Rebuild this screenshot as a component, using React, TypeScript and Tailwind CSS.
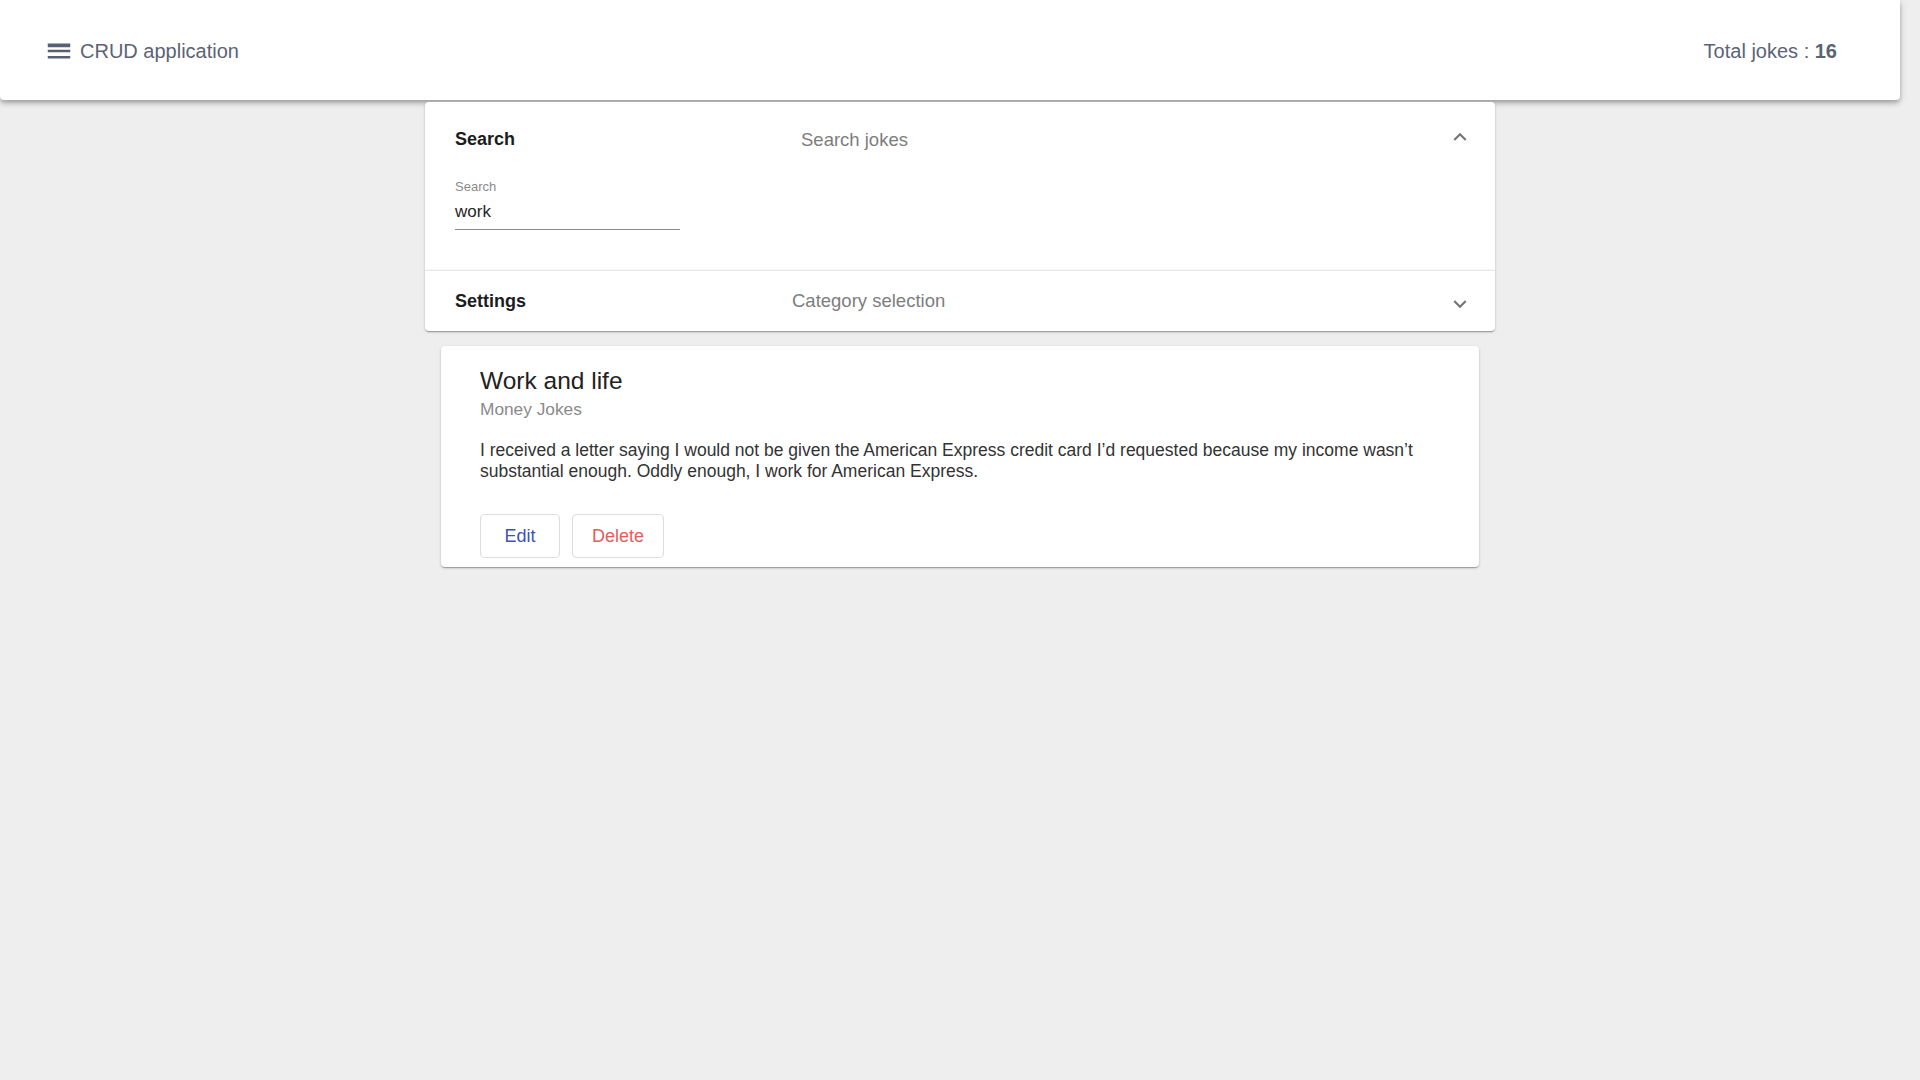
import React from "react";

function MenuIcon() {
  return (
    <svg width="30" height="30" viewBox="0 0 24 24" fill="#586075">
      <path d="M3 18h18v-2H3v2zm0-5h18v-2H3v2zm0-6v2h18V6H3z" />
    </svg>
  );
}

function Chevron({ up }: { up?: boolean }) {
  return (
    <svg
      width="26"
      height="26"
      viewBox="0 0 24 24"
      fill="#757575"
      className={up ? "rotate-180" : ""}
    >
      <path d="M16.59 8.59L12 13.17 7.41 8.59 6 10l6 6 6-6z" />
    </svg>
  );
}

export default function App() {
  return (
    <div className="min-h-screen bg-[#eeeeee] font-['Liberation_Sans',Arial,sans-serif]">
      <header className="flex h-[100px] w-[1900px] items-center justify-between rounded-b-[4px] bg-white pl-[44px] pr-[63px] pt-[2px] text-[20px] text-[#5b6376] shadow-[0_2px_4px_-1px_rgba(0,0,0,0.2),0_4px_5px_0_rgba(0,0,0,0.14),0_1px_10px_0_rgba(0,0,0,0.12)]">
        <div className="flex items-center gap-[6px]">
          <MenuIcon />
          <span>CRUD application</span>
        </div>
        <div>
          Total jokes : <span className="font-bold">16</span>
        </div>
      </header>

      <main className="mx-auto mt-[2px] w-[1070px]">
        <section className="rounded-t-[4px] bg-white shadow-[0_1px_3px_0_rgba(0,0,0,0.2),0_1px_1px_0_rgba(0,0,0,0.14),0_2px_1px_-1px_rgba(0,0,0,0.12)]">
          <div className="flex h-[73px] items-center pl-[30px] pr-[22px] pt-[2px]">
            <div className="w-[346px] text-[18px] font-bold text-[#1c1c1c]">Search</div>
            <div className="text-[18.5px] text-[#7d7d7d]">Search jokes</div>
            <div className="ml-auto -mt-[6px]">
              <Chevron up />
            </div>
          </div>
          <div className="px-[30px] pb-[40px] pt-[4px]">
            <div className="text-[13px] leading-[16px] text-[#8a8a8a]">Search</div>
            <div className="mt-[5px] w-[225px] border-b border-[#8a8a8a] pb-[5px] text-[17px] leading-[24px] text-[#262626]">
              work
            </div>
          </div>
        </section>
        <section className="rounded-b-[4px] border-t border-[#e6e6e6] bg-white shadow-[0_1px_3px_0_rgba(0,0,0,0.2),0_1px_1px_0_rgba(0,0,0,0.14),0_2px_1px_-1px_rgba(0,0,0,0.12)]">
          <div className="flex h-[60px] items-center pl-[30px] pr-[22px]">
            <div className="w-[337px] text-[18px] font-bold text-[#1c1c1c]">Settings</div>
            <div className="text-[18.5px] text-[#7d7d7d]">Category selection</div>
            <div className="ml-auto mt-[6px]">
              <Chevron />
            </div>
          </div>
        </section>

        <article className="mx-auto mt-[15px] w-[1038px] rounded-[4px] bg-white px-[39px] pb-[9px] pt-[19px] shadow-[0_1px_3px_0_rgba(0,0,0,0.2),0_1px_1px_0_rgba(0,0,0,0.14),0_2px_1px_-1px_rgba(0,0,0,0.12)]">
          <h2 className="text-[24.5px] leading-[32px] text-[#222222]">Work and life</h2>
          <div className="text-[17.3px] leading-[24px] text-[#8a8a8a]">Money Jokes</div>
          <p className="mt-[19px] text-[17.5px] leading-[21px] text-[#333333]">
            I received a letter saying I would not be given the American Express credit card I’d requested
            because my income wasn’t substantial enough. Oddly enough, I work for American Express.
          </p>
          <div className="mt-[32px] flex gap-[12px]">
            <button className="flex h-[44px] min-w-[80px] items-center justify-center rounded-[4px] border border-[#dddddd] px-[19px] text-[18px] text-[#3f51b5]">
              Edit
            </button>
            <button className="flex h-[44px] items-center justify-center rounded-[4px] border border-[#dddddd] px-[19px] text-[18px] text-[#e35d5d]">
              Delete
            </button>
          </div>
        </article>
      </main>
    </div>
  );
}
